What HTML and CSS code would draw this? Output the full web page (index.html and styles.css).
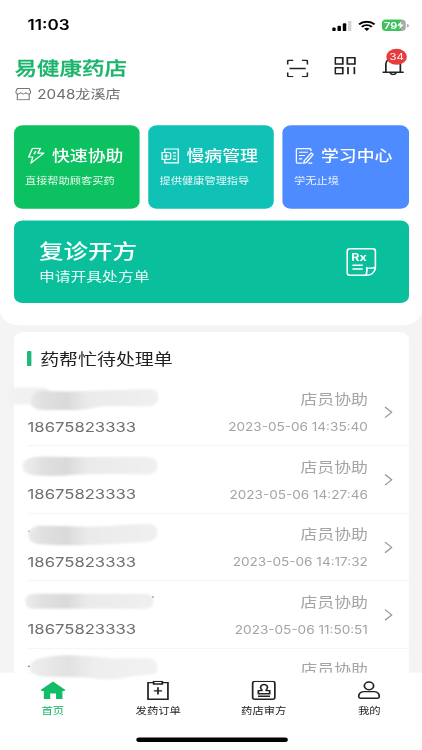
FILE: index.html
```html
<!DOCTYPE html>
<html lang="zh-CN">
<head>
    <meta charset="UTF-8">
    <meta name="viewport" content="width=device-width, initial-scale=1.0">
    <title>易健康药店</title>
    <link rel="stylesheet" href="styles.css">
</head>
<body>
<div class="screen">
    <div class="phone">
        <div class="header">
            <div class="status">
                <span class="time">11:03</span>
                <svg class="signal" width="18" height="12" viewBox="0 0 18 12">
                    <rect x="0" y="8" width="3.2" height="4" rx="1"/>
                    <rect x="4.9" y="6" width="3.2" height="6" rx="1"/>
                    <rect x="9.8" y="3.2" width="3.2" height="8.8" rx="1"/>
                    <rect x="14.7" y="0" width="3.2" height="12" rx="1" fill="#d2d2d2"/>
                </svg>
                <svg class="wifi" width="16" height="12" viewBox="0 0 16 12">
                    <g fill="none" stroke="#000" stroke-width="2.1">
                        <path d="M0.8 4.4a10.3 10.3 0 0 1 14.4 0"/>
                        <path d="M3.4 7.2a6.6 6.6 0 0 1 9.2 0"/>
                    </g>
                    <path d="M5.5 9.2a3.8 3.8 0 0 1 5 0L8 11.8z"/>
                </svg>
                <span class="battery">
                    <span>79</span>
                    <svg width="6" height="9" viewBox="0 0 6 9"><path d="M3.7 0L0 5.1h2.5L2.1 9 6 3.7H3.4z" fill="#fff"/></svg>
                </span>
                <span class="cap"></span>
            </div>

            <div class="top">
                <div class="store">
                    <h1>易健康药店</h1>
                    <p>
                        <svg width="15" height="14" viewBox="0 0 15 14" fill="none" stroke="#777" stroke-width="1">
                            <path d="M2 6.5v6.8h11V6.5M2 .6h11l1.4 3.8c0 3-4 3.2-4.5.4-.5 2.6-4.3 2.6-4.8 0C4.6 7.6.6 7.4.6 4.4z"/>
                        </svg>
                        <span>2048龙溪店</span>
                    </p>
                </div>
                <div class="tools">
                    <svg width="20" height="20" viewBox="0 0 20 20" fill="none" stroke="#222" stroke-width="1.6">
                        <path d="M.8 5.500V2Q.8.8 2 .8h4M14 .8h4q1.200 0 1.200 1.200v3.500M.8 14.500V18q0 1.200 1.200 1.200h4M14 19.200h4q1.200 0 1.200-1.200v-3.500M2.500 10h15"/>
                    </svg>
                    <svg class="qr" width="20" height="20" viewBox="0 0 20 20" fill="none" stroke="#222" stroke-width="1.6">
                        <path d="M.8 1h7v7h-7zM12 1h7v7h-7zM.8 12.200h7v6.800h-7zM12.600 11.500v8M18.500 11.500v8"/>
                    </svg>
                    <div class="bell">
                        <svg width="21" height="21" viewBox="0 0 21 21" fill="none" stroke="#222" stroke-width="1.6">
                            <path d="M.5 17.300h19.600M3.600 17.300V8a6.700 6.700 0 0 1 13.400 0v9.300M7.600 17.500a2.800 2.900 0 0 0 5.500 0"/>
                        </svg>
                        <span class="badge">34</span>
                    </div>
                </div>
            </div>

            <div class="cards">
                <div class="card green">
                    <h2>
                        <svg width="17" height="19" viewBox="0 0 17 19" fill="none" stroke="#fff" stroke-width="1.300" stroke-linejoin="round">
                            <path d="M5 1h7.300L10 6.300h5.500L3.600 17.500l1.700-6.800H1.500zM8 3.800L6.600 7.500"/>
                        </svg>
                        快速协助
                    </h2>
                    <p>直接帮助顾客买药</p>
                </div>
                <div class="card teal">
                    <h2>
                        <svg width="17" height="19" viewBox="0 0 17 19" fill="none" stroke="#fff" stroke-width="1.300">
                            <path d="M3.200 5V1.700h12.600v15.600H3.200V14M.7 5.600h6.500q1.500 0 1.500 1.400v5q0 1.400-1.500 1.400H.7zM4.600 7v5M2.300 9.500h4.700M10.700 6h3M11 9.500h2.700M10.700 13h3"/>
                        </svg>
                        慢病管理
                    </h2>
                    <p>提供健康管理指导</p>
                </div>
                <div class="card blue">
                    <h2>
                        <svg width="17" height="19" viewBox="0 0 17 19" fill="none" stroke="#fff" stroke-width="1.300">
                            <path d="M14.300 4V2.500q0-1.300-1.300-1.300H2Q.8 1.200.8 2.500v13.700q0 1.300 1.200 1.300h4.500M3.300 5.300h8.200M3.300 9h5.500M3.300 12.700h3M14.500 6.200l2 1.600-6.300 9-2.400.8.300-2.600zM12 17.600h3.600"/>
                        </svg>
                        学习中心
                    </h2>
                    <p>学无止境</p>
                </div>
            </div>

            <div class="banner">
                <div>
                    <h2>复诊开方</h2>
                    <p>申请开具处方单</p>
                </div>
                <svg width="28" height="32" viewBox="0 0 28 32" fill="none" stroke="#fff" stroke-width="1.600">
                    <path d="M18 30.800H3.500Q.8 30.800.8 28V3.700Q.8 1 3.500 1h20.800Q27 1 27 3.700V22q-1 8.800-9 8.800 1.400-2.800 1-8.300 4.500 1.200 8-.8M5.700 19.500h9.500M5.700 23.800h9.500"/>
                    <text x="4.600" y="15" class="rx">Rx</text>
                </svg>
            </div>
        </div>

        <div class="list">
            <h3>药帮忙待处理单</h3>

            <div class="row">
                <svg class="smear" viewBox="0 0 160 67.500" preserveAspectRatio="none">
                    <defs>
                        <linearGradient id="grey" gradientUnits="userSpaceOnUse" x1="18" y1="0" x2="153" y2="0">
                            <stop offset="0" stop-color="#eeeeee"/>
                            <stop offset=".14" stop-color="#e0e0e0"/>
                            <stop offset=".32" stop-color="#dadada"/>
                            <stop offset=".48" stop-color="#ebebeb"/>
                            <stop offset="1" stop-color="#f0f0f0"/>
                        </linearGradient>
                    </defs>
                    <path d="M10 9h27q5 0 8 4v13H10q-8-2-8-9t8-8z" fill="#f1f1f1"/>
                    <path d="M34 12q26 2 64 0l46-1.500q9 0 9 8.500 0 7-8 9-22-1-50 0-15 4-30 3.500H38q-9 0-13-6 0-10 9-13.500z" fill="url(#grey)"/>
                </svg>
                <div class="left">18675823333</div>
                <div class="right"><span>店员协助</span><em>2023-05-06 14:35:40</em></div>
                <svg class="arrow" viewBox="0 0 8 14"><path d="M.8 1l6.200 6-6.200 6"/></svg>
            </div>
            <div class="row">
                <svg class="smear" viewBox="0 0 160 67.500" preserveAspectRatio="none">
                    <path d="M29 11q10-1 25 0h89q9 1 9 9t-9 8.500q-40-1-70 0-20 2-42 1-14-1-14-9t12-9.500z" fill="url(#grey)"/>
                </svg>
                <div class="left">18675823333</div>
                <div class="right"><span>店员协助</span><em>2023-05-06 14:27:46</em></div>
                <svg class="arrow" viewBox="0 0 8 14"><path d="M.8 1l6.200 6-6.200 6"/></svg>
            </div>
            <div class="row">
                <svg class="smear" viewBox="0 0 160 67.500" preserveAspectRatio="none">
                    <path d="M33 12q25 0 48 1 20 0 38-2l25-1q8 1 8 9 0 7-9 9-30 2-55 3-25 1-45 0l-12-1q-8-2-8-9t10-9z" fill="url(#grey)"/>
                    <circle cx="23.500" cy="17.500" r=".6" fill="#777"/>
                </svg>
                <div class="left">18675823333</div>
                <div class="right"><span>店员协助</span><em>2023-05-06 14:17:32</em></div>
                <svg class="arrow" viewBox="0 0 8 14"><path d="M.8 1l6.200 6-6.200 6"/></svg>
            </div>
            <div class="row">
                <svg class="smear" viewBox="0 0 160 67.500" preserveAspectRatio="none">
                    <path d="M29 12.500h110q9 0 9 7.500t-9 7.500H29q-9 0-9-7.500t9-7.500z" fill="url(#grey)"/>
                    <circle cx="147.500" cy="15.800" r=".7" fill="#555"/>
                </svg>
                <div class="left">18675823333</div>
                <div class="right"><span>店员协助</span><em>2023-05-06 11:50:51</em></div>
                <svg class="arrow" viewBox="0 0 8 14"><path d="M.8 1l6.200 6-6.200 6"/></svg>
            </div>
            <div class="row">
                <svg class="smear" viewBox="0 0 160 67.500" preserveAspectRatio="none">
                    <defs>
                        <linearGradient id="light" gradientUnits="userSpaceOnUse" x1="24" y1="0" x2="153" y2="0">
                            <stop offset="0" stop-color="#eeeeee"/>
                            <stop offset=".3" stop-color="#e2e2e2"/>
                            <stop offset=".5" stop-color="#eeeeee"/>
                            <stop offset="1" stop-color="#f2f2f2"/>
                        </linearGradient>
                    </defs>
                    <path d="M33 10q15-4 34-3.500 20 1 42 3h35q8 1 8 9t-9 7.500q-18 1-29 4-13 2-30-1-15-1-45-1-14-2-15-8 0-7 9-10z" fill="url(#light)"/>
                    <circle cx="23.500" cy="17.500" r=".8" fill="#555"/>
                </svg>
                <div class="left"></div>
                <div class="right"><span>店员协助</span></div>
                <svg class="arrow" viewBox="0 0 8 14"><path d="M.8 1l6.200 6-6.200 6"/></svg>
            </div>
        </div>

        <div class="tabs">
            <div class="tab active">
                <svg width="24" height="22" viewBox="0 0 24 22" fill="#12bd66"><path d="M12 .8l11.500 9.700-1 1.200h-1.800v9h-5.900v-6.200H9.400v6.200H3.500v-9H1.600L.5 10.500z"/></svg>
                <span>首页</span>
            </div>
            <div class="tab">
                <svg width="24" height="22" viewBox="0 0 24 22" fill="none" stroke="#222" stroke-width="1.600">
                    <path d="M8 2.200H2.800v18.600h18.400V2.200H16M8 .8h8v3H8zM12 7.500v8M8.200 11.500h7.600"/>
                </svg>
                <span>发药订单</span>
            </div>
            <div class="tab">
                <svg width="24" height="22" viewBox="0 0 24 22" fill="none" stroke="#222" stroke-width="1.600">
                    <rect x="1.500" y=".8" width="20.500" height="20" rx="2"/>
                    <path d="M10 11.200q.2-1.200-.8-2.200a3.200 3.200 0 1 1 5.600 0q-1 1-.8 2.200h3.200v3.500H6.800v-3.500zM6.500 17.500h11"/>
                </svg>
                <span>药店审方</span>
            </div>
            <div class="tab">
                <svg width="24" height="22" viewBox="0 0 24 22" fill="none" stroke="#222" stroke-width="1.600">
                    <circle cx="12" cy="5.800" r="4.300"/>
                    <path d="M7 12.300h10q4.500.5 4.500 5.500 0 2-1.500 2H4q-1.500 0-1.500-2 0-5 4.500-5.500z"/>
                </svg>
                <span>我的</span>
            </div>
        </div>
        <div class="home-line"></div>
    </div>
</div>
</body>
</html>
```

FILE: styles.css
```css
*{
    box-sizing: border-box;
    margin: 0;
    padding: 0;
}
body{
    background: #f4f4f4;
    font-family: Inter, "Noto Sans CJK SC", sans-serif;
}
svg{
    display: block;
    flex: none;
}
h1, h2, h3, p, span{
    white-space: nowrap;
}
.screen{
    width: 422px;
    height: 750px;
    overflow: hidden;
}
/* 390x844 screen stretched to the window */
.phone{
    position: relative;
    display: flex;
    flex-direction: column;
    width: 390px;
    height: 844px;
    margin-bottom: -94px;
    overflow: hidden;
    background: #f4f4f4;
    transform: scale(1.08205, 0.88863);
    transform-origin: 0 0;
}

.header{
    flex: none;
    height: 366px;
    padding: 0 12.500px;
    background: #fff;
    border-radius: 0 0 17px 17px;
}
.status{
    display: flex;
    align-items: center;
    height: 57px;
    padding: 0 0 0 13px;
}
.time{
    flex: 1;
    font-size: 15.800px;
    font-weight: 600;
}
.wifi{
    margin: 0 6px 0 6px;
}
.battery{
    display: flex;
    align-items: center;
    justify-content: center;
    width: 22px;
    height: 12.500px;
    border-radius: 4px;
    background: linear-gradient(to right, #3cc35c 79%, #aaa 79%);
    color: #fff;
    font-size: 10px;
    font-weight: 700;
}
.cap{
    width: 1.500px;
    height: 4px;
    margin: 0 0 0 1px;
    border-radius: 0 2px 2px 0;
    background: #aaa;
}

.top{
    display: flex;
    justify-content: space-between;
    height: 84px;
    padding: 5px 4px 0 1px;
}
.store h1{
    font-size: 20.800px;
    line-height: 30px;
    font-weight: 500;
    color: #1cb46c;
    -webkit-text-stroke: .3px #1cb46c;
}
.store p{
    display: flex;
    align-items: center;
    gap: 6px;
    font-size: 14px;
    line-height: 27px;
    color: #6c6c6c;
}
.tools{
    display: flex;
    padding-top: 5px;
    gap: 24px;
}
.tools .qr{
    margin-top: -3px;
}
.bell{
    position: relative;
    margin-top: -3px;
}
.badge{
    position: absolute;
    left: 4.500px;
    top: -9px;
    width: 19px;
    height: 18px;
    border-radius: 50%;
    background: #e93b3d;
    color: #fff;
    font-size: 10.500px;
    line-height: 18px;
    text-align: center;
}

.cards{
    display: grid;
    grid-template-columns: 1fr 1fr 1fr;
    gap: 8px;
}
.card{
    height: 94px;
    padding: 22px 0 0 10.500px;
    border-radius: 8px;
    color: #fff;
}
.green{
    background: #0cc160;
}
.teal{
    background: #10c2b5;
}
.blue{
    background: #4e8bff;
}
.card h2{
    display: flex;
    align-items: center;
    gap: 6.500px;
    padding-left: 1.500px;
    font-size: 16.500px;
    line-height: 24px;
    font-weight: 500;
}
.card p{
    padding-top: 9px;
    font-size: 10.400px;
    line-height: 16px;
    opacity: .9;
}
.banner{
    display: flex;
    justify-content: space-between;
    height: 93px;
    margin-top: 12.500px;
    padding: 19px 30px 0 23.500px;
    border-radius: 8px;
    background: #0ac09c;
    color: #fff;
}
.banner h2{
    font-size: 22.700px;
    line-height: 32px;
    font-weight: 500;
}
.banner p{
    font-size: 14.600px;
    line-height: 24px;
    opacity: .9;
}
.banner svg{
    margin-top: 12px;
}
.rx{
    font-size: 11.500px;
    font-weight: 700;
    fill: #fff;
    stroke: none;
}

.list{
    flex: none;
    height: 383.400px;
    margin: 8px 12.500px 0;
    border-radius: 8px 8px 0 0;
    background: #fff;
}
.list h3{
    display: flex;
    align-items: center;
    gap: 8.500px;
    height: 52px;
    padding: 7px 0 0 12.500px;
    font-size: 17.500px;
    font-weight: 400;
    color: #222;
}
.list h3::before{
    content: "";
    width: 3.600px;
    height: 17.500px;
    border-radius: 1px;
    background: #1cb878;
}
.row{
    position: relative;
    display: flex;
    height: 76px;
    margin-left: 13px;
    padding-right: 15px;
    border-bottom: 1px solid #f3f3f3;
}
.row:last-child{
    border: 0;
}
.smear{
    position: absolute;
    z-index: 2;
    left: -20.900px;
    top: 0;
    width: 147.900px;
    height: 76px;
    overflow: visible;
}
.smear path{
    filter: blur(.8px);
}
.left{
    flex: 1;
    padding-top: 43px;
    font-size: 15.400px;
    line-height: 24px;
    color: #6e6e6e;
}
.right{
    display: flex;
    flex-direction: column;
    align-items: flex-end;
    padding: 12px 14.500px 0 0;
    color: #a4a4a4;
}
.right span{
    font-size: 15.600px;
    line-height: 24px;
}
.right em{
    font-style: normal;
    font-size: 12.550px;
    line-height: 24px;
    margin-top: 7px;
}
.arrow{
    width: 8px;
    height: 14px;
    margin-top: 31px;
    fill: none;
    stroke: #999;
    stroke-width: 1.300;
}

/* bottom bar */
.tabs{
    flex: none;
    display: grid;
    grid-template-columns: repeat(4, 1fr);
    position: relative;
    z-index: 1;
    height: 87px;
    padding-top: 9px;
    background: #fff;
}
.tab{
    display: flex;
    flex-direction: column;
    align-items: center;
    gap: 5px;
    font-size: 10.500px;
    line-height: 16px;
    color: #222;
}
.active{
    color: #12b566;
}
.home-line{
    position: absolute;
    z-index: 3;
    left: 125.500px;
    bottom: 9.500px;
    width: 140px;
    height: 5px;
    border-radius: 3px;
    background: #000;
}
```
